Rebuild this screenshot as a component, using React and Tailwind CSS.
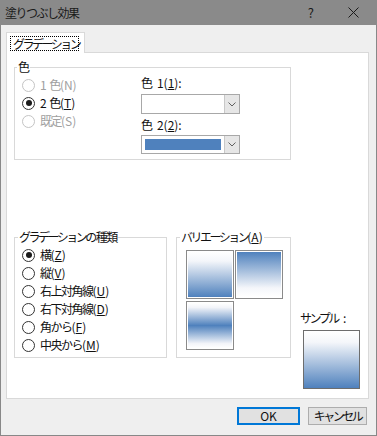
import React from "react";

const FONT = { fontFamily: '"Noto Sans CJK JP", "Noto Sans", sans-serif' };

// ascii runs keep normal spacing, the CJK around them is squeezed
function A({ children }) {
    return <span className="tracking-normal">{children}</span>;
}

// kana runs are narrower than kanji in the original UI font
function K({ children }) {
    return <span className="tracking-[-2.5px]">{children}</span>;
}

function Key({ children }) {
    return <span className="underline underline-offset-1">{children}</span>;
}

function Radio({ label, checked, disabled }) {
    return (
        <div className="flex h-[18px] items-center gap-[5px] whitespace-nowrap">
            <span
                className={`flex h-[13px] w-[13px] shrink-0 items-center justify-center rounded-full border bg-white ${
                    disabled ? "border-[#c4c4c4]" : "border-[#333]"
                }`}
            >
                {checked && <span className="h-[6px] w-[6px] rounded-full bg-[#1a1a1a]" />}
            </span>
            <span className={disabled ? "text-[#a0a0a0]" : "text-[#111]"}>{label}</span>
        </div>
    );
}

function Combo({ color, tall }) {
    return (
        <div className={`flex w-[99px] border border-[#a8a8a8] bg-white ${tall ? "h-[20px]" : "h-[19px]"}`}>
            <div className="flex flex-1 items-center px-[3px]">
                {color && <div className="h-[11px] w-full" style={{ background: color }} />}
            </div>
            <div className="flex w-[15px] items-center justify-center border-l border-[#c8c8c8] bg-[#e6e6e6]">
                <svg width="8" height="5" viewBox="0 0 8 5">
                    <path d="M0.5 0.5 L4 4 L7.5 0.5" fill="none" stroke="#606060" strokeWidth="1" />
                </svg>
            </div>
        </div>
    );
}

function Tile({ bg }) {
    return (
        <div className="h-[49px] w-[48px] border border-[#8a8a8a] bg-white p-[1px]">
            <div className="h-full w-full" style={{ background: bg }} />
        </div>
    );
}

const BLUE = "#4f81bd";
const DOWN = `linear-gradient(to bottom, #ffffff 0%, #f4f6fa 20%, ${BLUE} 100%)`;
const UP = `linear-gradient(to top, #ffffff 0%, #f4f6fa 20%, ${BLUE} 100%)`;
const MID = `linear-gradient(to bottom, #ffffff 0%, #f2f4f9 10%, ${BLUE} 50%, #f2f4f9 90%, #ffffff 100%)`;

export default function App() {
    return (
        <div
            className="flex h-[436px] w-[377px] flex-col border-x border-b border-[#888] bg-[#efefef] text-[12px] leading-[14px] tracking-[-1.5px] text-[#111]"
            style={FONT}
        >
            {/* Title bar */}
            <div className="-mx-px flex h-[25px] shrink-0 items-center bg-[#8a8a8a] pl-[5px] text-[12px] text-[#1a1a1a]">
                <span className="flex-1">塗りつぶし効果</span>
                <span className="mr-[34px] text-[13px] tracking-normal">?</span>
                <svg width="11" height="11" viewBox="0 0 11 11" className="mr-[18px]">
                    <path d="M0.5 0.5 L10.5 10.5 M10.5 0.5 L0.5 10.5" stroke="#1a1a1a" strokeWidth="1" />
                </svg>
            </div>

            <div className="pl-[5px] pr-[7px] pt-[7px]">
                {/* Tab */}
                <div className="relative z-10 -mb-px flex h-[21px] w-[79px] items-start border border-b-0 border-[#d9d9d9] bg-white pl-[3px] pt-[3px]">
                    <span className="w-[69px] whitespace-nowrap border border-dotted border-black pl-[2px] leading-[13px] tracking-[-2.5px]">
                        グラデーション
                    </span>
                </div>

                {/* Panel */}
                <div className="h-[347px] border border-[#d9d9d9] bg-white pl-[7px]">
                    <fieldset className="mt-[7px] h-[100px] w-[277px] border border-[#d9d9d9]">
                        <legend className="ml-[2px] px-[1px]">色</legend>
                        <div className="flex pt-[2px]">
                            <div className="w-[126px] pl-[7px]">
                                <Radio label={<><A>1 </A>色<A>(N)</A></>} disabled />
                                <Radio label={<><A>2 </A>色<A>(<Key>T</Key>)</A></>} checked />
                                <Radio label={<>既定<A>(S)</A></>} disabled />
                            </div>
                            <div className="flex flex-col">
                                <span className="whitespace-nowrap">
                                    色<A>{"\u00a0\u00a0"}1(<Key>1</Key>):</A>
                                </span>
                                <div className="mt-[4px]">
                                    <Combo tall />
                                </div>
                                <span className="mt-[4px] whitespace-nowrap">
                                    色<A>{"\u00a0\u00a0"}2(<Key>2</Key>):</A>
                                </span>
                                <div className="mt-[3px]">
                                    <Combo color={BLUE} />
                                </div>
                            </div>
                        </div>
                    </fieldset>

                    <div className="mt-[70px] flex items-start">
                        <fieldset className="h-[128px] w-[153px] border border-[#d9d9d9]">
                            <legend className="ml-[3px] px-[1px]">
                                <K>グラデーション</K>の種類
                            </legend>
                            <div className="pl-[7px] pt-[2px]">
                                <Radio label={<>横<A>(<Key>Z</Key>)</A></>} checked />
                                <Radio label={<>縦<A>(<Key>V</Key>)</A></>} />
                                <Radio label={<>右上対角線<A>(<Key>U</Key>)</A></>} />
                                <Radio label={<>右下対角線<A>(<Key>D</Key>)</A></>} />
                                <Radio label={<>角から<A>(<Key>F</Key>)</A></>} />
                                <Radio label={<>中央から<A>(<Key>M</Key>)</A></>} />
                            </div>
                        </fieldset>

                        <fieldset className="ml-[9px] h-[128px] w-[115px] border border-[#d9d9d9]">
                            <legend className="ml-[3px] px-[1px]">
                                <K>バリエーション</K>
                                <A>(<Key>A</Key>)</A>
                            </legend>
                            <div className="grid w-fit grid-cols-[48px_48px] gap-x-[1px] gap-y-[2px] pl-[9px] pt-[6px]">
                                <Tile bg={DOWN} />
                                <Tile bg={UP} />
                                <Tile bg={MID} />
                            </div>
                        </fieldset>

                        <div className="ml-[9px] flex flex-col pt-[81px]">
                            <span className="whitespace-nowrap">
                                <K>サンプル</K>
                                <A>{"\u00a0\u00a0"}:</A>
                            </span>
                            <div
                                className="ml-[3px] mt-[5px] h-[59px] w-[57px] border border-[#6d6d6d]"
                                style={{ background: DOWN }}
                            />
                        </div>
                    </div>
                </div>

                {/* Buttons */}
                <div className="mt-[8px] flex justify-end gap-[8px] pr-[2px]">
                    <button className="flex h-[18px] w-[63px] items-center justify-center border-2 border-[#0078d7] bg-[#e1e1e1] tracking-normal">
                        OK
                    </button>
                    <button className="flex h-[18px] w-[59px] items-center justify-center border border-[#adadad] bg-[#e1e1e1] tracking-[-2.5px]">
                        キャンセル
                    </button>
                </div>
            </div>
        </div>
    );
}
